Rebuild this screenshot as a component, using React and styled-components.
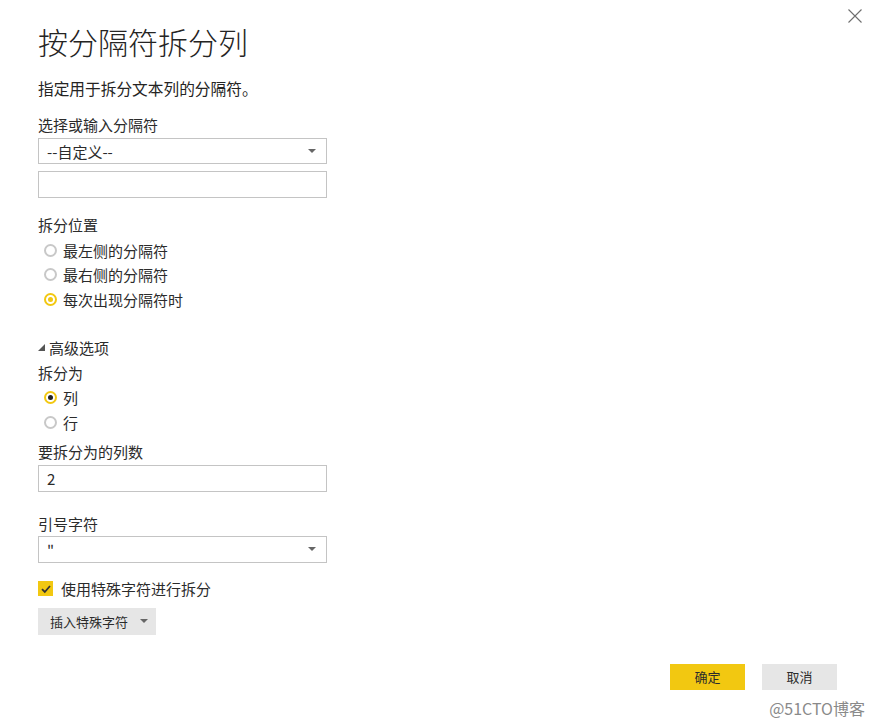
import React from 'react';
import styled, { createGlobalStyle } from 'styled-components';

const GlobalStyle = createGlobalStyle`
  body {
    margin: 0;
    background: #ffffff;
    font-family: "Noto Sans CJK SC", "Noto Sans", "Liberation Sans", sans-serif;
    color: #2b2b2b;
  }
`;

const Dialog = styled.div`
  position: relative;
  width: 874px;
  height: 728px;
  box-sizing: border-box;
  padding: 22px 37px 0 38px;
  background: #fff;
  overflow: hidden;
`;

const CloseButton = styled.button`
  position: absolute;
  top: 8px;
  right: 11px;
  width: 16px;
  height: 16px;
  padding: 0;
  border: 0;
  background: transparent;
  svg { display: block; }
`;

const Title = styled.h1`
  margin: 0;
  font-size: 30px;
  line-height: 38px;
  font-weight: 300;
  color: #252423;
`;

const Subtitle = styled.p`
  margin: 19px 0 0;
  font-size: 15.7px;
  line-height: 20px;
  color: #252423;
`;

const Label = styled.div`
  margin-top: ${p => p.$top || 0}px;
  font-size: 15px;
  line-height: 20px;
  color: #2b2b2b;
`;

const Field = styled.div`
  position: relative;
  width: 289px;
  height: ${p => p.$h || 27}px;
  margin-top: ${p => p.$top || 0}px;
  box-sizing: border-box;
  border: 1px solid #c4c4c4;
  background: #fff;
  display: flex;
  align-items: center;
  padding: 0 8px;
  font-size: 15px;
  color: #2b2b2b;
`;

const Caret = styled.span`
  margin-left: auto;
  width: 0;
  height: 0;
  border-left: 4px solid transparent;
  border-right: 4px solid transparent;
  border-top: 4px solid #666;
  margin-right: 2px;
`;

const RadioGroup = styled.div`
  margin-top: ${p => p.$top || 0}px;
  display: flex;
  flex-direction: column;
`;

const RadioRow = styled.label`
  display: flex;
  align-items: center;
  height: ${p => p.$h || 24.5}px;
  padding-left: 6px;
  gap: 6px;
  font-size: 15px;
  color: #2b2b2b;
`;

const RadioCircle = styled.span`
  width: 13px;
  height: 13px;
  box-sizing: border-box;
  border-radius: 50%;
  border: 2px solid ${p => (p.$on ? '#f2c811' : '#c8c8c8')};
  display: flex;
  align-items: center;
  justify-content: center;
  &::after {
    content: '';
    display: ${p => (p.$dot ? 'block' : 'none')};
    width: 5px;
    height: 5px;
    border-radius: 50%;
    background: ${p => p.$dot};
  }
`;

const Toggle = styled.div`
  margin-top: 26px;
  display: flex;
  align-items: center;
  gap: 4px;
  font-size: 15px;
  line-height: 20px;
  color: #2b2b2b;
`;

const CheckRow = styled.label`
  margin-top: 16px;
  display: flex;
  align-items: center;
  gap: 8px;
  height: 20px;
  font-size: 15px;
  color: #2b2b2b;
`;

const CheckBox = styled.span`
  width: 15px;
  height: 15px;
  background: #f2c811;
  display: flex;
  align-items: center;
  justify-content: center;
`;

const GrayButton = styled.button`
  height: 27px;
  border: 0;
  background: #e6e6e6;
  font-family: inherit;
  font-size: 13px;
  color: #2b2b2b;
  white-space: nowrap;
  display: flex;
  align-items: center;
  justify-content: center;
  gap: 12px;
  padding: 0 12px;
`;

const InsertButton = styled(GrayButton)`
  margin-top: 9px;
  width: 118px;
  padding: 0 10px 0 12px;
  justify-content: flex-start;
`;

const Footer = styled.div`
  margin-top: 29px;
  display: flex;
  justify-content: flex-end;
  gap: 17px;
`;

const FooterButton = styled(GrayButton)`
  width: 75px;
  height: 26px;
  padding: 0;
  background: ${p => (p.$primary ? '#f2c811' : '#e6e6e6')};
`;

const Watermark = styled.div`
  position: absolute;
  right: 9px;
  bottom: 8px;
  font-size: 16px;
  color: #8a8a8a;
`;

export default function App() {
  return (
    <>
      <GlobalStyle />
      <Dialog>
        <CloseButton aria-label="关闭">
          <svg width="16" height="16" viewBox="0 0 16 16">
            <path d="M1.5 1.5 L14.5 14.5 M14.5 1.5 L1.5 14.5" stroke="#6e6e6e" strokeWidth="1.1" />
          </svg>
        </CloseButton>

        <Title>按分隔符拆分列</Title>
        <Subtitle>指定用于拆分文本列的分隔符。</Subtitle>

        <Label $top={16}>选择或输入分隔符</Label>
        <Field $top={3} $h={26}>
          --自定义--
          <Caret />
        </Field>
        <Field $top={7} />

        <Label $top={17}>拆分位置</Label>
        <RadioGroup $top={3}>
          <RadioRow><RadioCircle />最左侧的分隔符</RadioRow>
          <RadioRow><RadioCircle />最右侧的分隔符</RadioRow>
          <RadioRow><RadioCircle $on $dot="#f2c811" />每次出现分隔符时</RadioRow>
        </RadioGroup>

        <Toggle>
          <svg width="7" height="7" viewBox="0 0 7 7">
            <polygon points="7,0 7,7 0,7" fill="#555" />
          </svg>
          高级选项
        </Toggle>
        <Label $top={5}>拆分为</Label>
        <RadioGroup $top={2}>
          <RadioRow $h={25.5}><RadioCircle $on $dot="#222" />列</RadioRow>
          <RadioRow $h={25.5}><RadioCircle />行</RadioRow>
        </RadioGroup>

        <Label $top={6}>要拆分为的列数</Label>
        <Field $top={3}>2</Field>

        <Label $top={22}>引号字符</Label>
        <Field $top={2}>
          "
          <Caret />
        </Field>

        <CheckRow>
          <CheckBox>
            <svg width="12" height="12" viewBox="0 0 12 12">
              <path d="M2 6.2 L4.8 9 L10 3" fill="none" stroke="#333" strokeWidth="1.8" />
            </svg>
          </CheckBox>
          使用特殊字符进行拆分
        </CheckRow>
        <InsertButton>
          插入特殊字符
          <Caret />
        </InsertButton>

        <Footer>
          <FooterButton $primary>确定</FooterButton>
          <FooterButton>取消</FooterButton>
        </Footer>

        <Watermark>@51CTO博客</Watermark>
      </Dialog>
    </>
  );
}
